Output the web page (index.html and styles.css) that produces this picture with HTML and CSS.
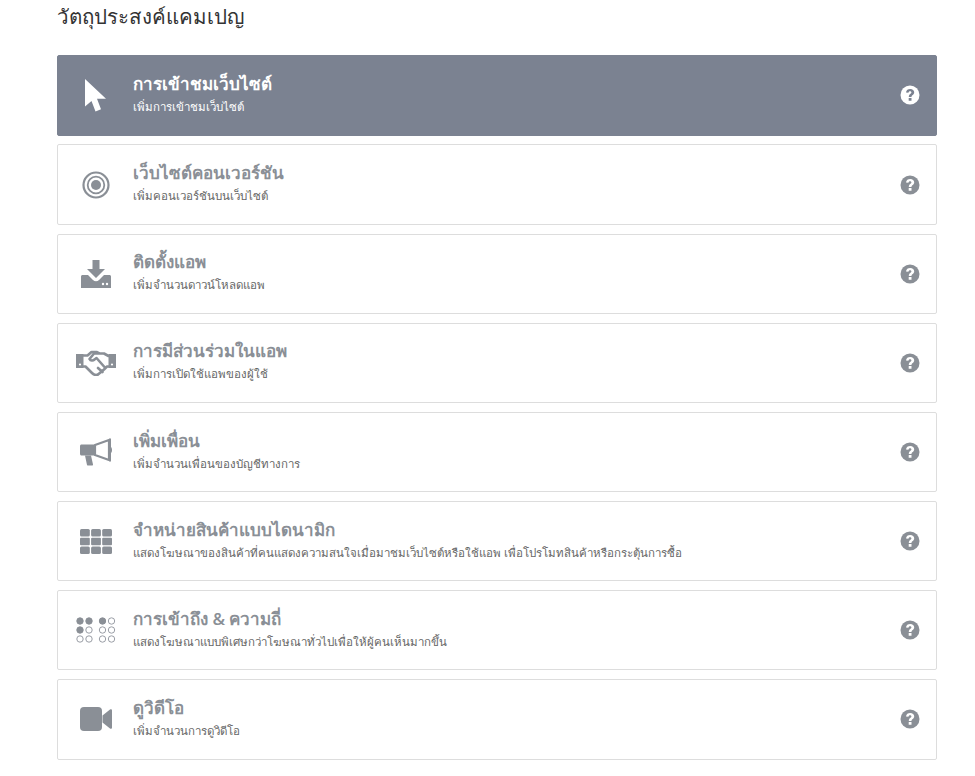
FILE: index.html
```html
<!DOCTYPE html>
<html lang="th">
<head>
<meta charset="utf-8">
<title>วัตถุประสงค์แคมเปญ</title>
<link rel="stylesheet" href="styles.css">
</head>
<body>
<main class="page">
  <h1 class="heading">วัตถุประสงค์แคมเปญ</h1>
  <div class="list">
    <div class="card active">
      <div class="icon"><svg width="24" height="34" viewBox="0 0 24 34"><path d="M1 1V28.500l6.500-5.500L11.500 33.500l5.500-2.200-4-10.500h9z" fill="currentColor"/></svg></div>
      <div class="text"><div class="title">การเข้าชมเว็บไซต์</div><div class="sub">เพิ่มการเข้าชมเว็บไซต์</div></div>
      <svg class="help" width="20" height="20" viewBox="0 0 20 20"><circle cx="10" cy="10" r="9.500" fill="currentColor"/><path class="q" d="M6 7.500C6.200 5 8 3.900 10.200 3.900c2.300 0 4 1.400 4 3.400 0 2.700-2.700 2.800-2.700 4.700H8.800c0-3.100 2.600-3.100 2.600-4.500 0-.8-.6-1.300-1.400-1.300-.9 0-1.400.6-1.600 1.500z M8.700 13h2.800v2.800H8.700z"/></svg>
    </div>
    <div class="card">
      <div class="icon"><svg width="28" height="28" viewBox="0 0 28 28"><circle cx="14" cy="14" r="12.500" fill="none" stroke="currentColor" stroke-width="2.200"/><circle cx="14" cy="14" r="8.300" fill="none" stroke="currentColor" stroke-width="1.800"/><circle cx="14" cy="14" r="5" fill="currentColor"/></svg></div>
      <div class="text"><div class="title">เว็บไซต์คอนเวอร์ชัน</div><div class="sub">เพิ่มคอนเวอร์ชันบนเว็บไซต์</div></div>
      <svg class="help" width="20" height="20" viewBox="0 0 20 20"><circle cx="10" cy="10" r="9.500" fill="currentColor"/><path class="q" d="M6 7.500C6.200 5 8 3.900 10.200 3.900c2.300 0 4 1.400 4 3.400 0 2.700-2.700 2.800-2.700 4.700H8.800c0-3.100 2.600-3.100 2.600-4.500 0-.8-.6-1.300-1.400-1.300-.9 0-1.400.6-1.600 1.500z M8.700 13h2.800v2.800H8.700z"/></svg>
    </div>
    <div class="card">
      <div class="icon"><svg width="30" height="28" viewBox="0 0 30 28"><path d="M11.500 0h7v9H24L15 18 6 9h5.500z" fill="currentColor"/><path d="M1.500 15H7l5 5c1.700 1.600 4.300 1.600 6 0l5-5h5.500c.8 0 1.500.7 1.500 1.500V28H0V16.500C0 15.700.7 15 1.500 15z" fill="currentColor"/><circle cx="22" cy="24" r="1.200" fill="#fff"/><circle cx="26" cy="24" r="1.200" fill="#fff"/></svg></div>
      <div class="text"><div class="title">ติดตั้งแอพ</div><div class="sub">เพิ่มจำนวนดาวน์โหลดแอพ</div></div>
      <svg class="help" width="20" height="20" viewBox="0 0 20 20"><circle cx="10" cy="10" r="9.500" fill="currentColor"/><path class="q" d="M6 7.500C6.200 5 8 3.900 10.200 3.900c2.300 0 4 1.400 4 3.400 0 2.700-2.700 2.800-2.700 4.700H8.800c0-3.100 2.600-3.100 2.600-4.500 0-.8-.6-1.300-1.400-1.300-.9 0-1.400.6-1.600 1.500z M8.700 13h2.800v2.800H8.700z"/></svg>
    </div>
    <div class="card">
      <div class="icon"><svg width="40" height="26" viewBox="0 0 40 26"><path d="M0 4h7.500v14H0z M32.500 4H40v14h-7.500z" fill="currentColor"/><circle cx="4" cy="14.500" r="1.100" fill="#fff"/><circle cx="36" cy="14.500" r="1.100" fill="#fff"/><path d="M7.500 5.500h4L15.500 2h5l3 1.500H28l4.500 2.500M7.500 16.500h2L16 23c2 2 4 2.500 6 1.500l6-5 3-3h1.500M23 3.500h-5l-4.500 5.500c1 2 3.500 2 5 .5l2-1.500 7.500 8.500M22 18l4.500 4" fill="none" stroke="currentColor" stroke-width="2.600" stroke-linejoin="round" stroke-linecap="round"/></svg></div>
      <div class="text"><div class="title">การมีส่วนร่วมในแอพ</div><div class="sub">เพิ่มการเปิดใช้แอพของผู้ใช้</div></div>
      <svg class="help" width="20" height="20" viewBox="0 0 20 20"><circle cx="10" cy="10" r="9.500" fill="currentColor"/><path class="q" d="M6 7.500C6.200 5 8 3.900 10.200 3.900c2.300 0 4 1.400 4 3.400 0 2.700-2.700 2.800-2.700 4.700H8.800c0-3.100 2.600-3.100 2.600-4.500 0-.8-.6-1.300-1.400-1.300-.9 0-1.400.6-1.600 1.500z M8.700 13h2.800v2.800H8.700z"/></svg>
    </div>
    <div class="card">
      <div class="icon"><svg width="32" height="28" viewBox="0 0 32 28"><path d="M1.500 6.500H15v11H1.500C.7 17.500 0 16.800 0 16V8c0-.8.700-1.500 1.500-1.500z" fill="currentColor"/><path d="M5 17.500h6l2 9c.1.700-.3 1-1 1H8c-.7 0-1-.3-1.100-1z" fill="currentColor"/><path d="M15 7 29 2v20l-14-5z" fill="none" stroke="currentColor" stroke-width="2.200" stroke-linejoin="round"/><path d="M29 .5h2v23h-2z M31 9c.6.500 1 1.500 1 3s-.4 2.500-1 3z" fill="currentColor"/></svg></div>
      <div class="text"><div class="title">เพิ่มเพื่อน</div><div class="sub">เพิ่มจำนวนเพื่อนของบัญชีทางการ</div></div>
      <svg class="help" width="20" height="20" viewBox="0 0 20 20"><circle cx="10" cy="10" r="9.500" fill="currentColor"/><path class="q" d="M6 7.500C6.200 5 8 3.900 10.200 3.900c2.300 0 4 1.400 4 3.400 0 2.700-2.700 2.800-2.700 4.700H8.800c0-3.100 2.600-3.100 2.600-4.500 0-.8-.6-1.300-1.400-1.300-.9 0-1.400.6-1.600 1.500z M8.700 13h2.800v2.800H8.700z"/></svg>
    </div>
    <div class="card">
      <div class="icon"><svg width="32" height="25" viewBox="0 0 32 25" fill="currentColor"><rect width="9.800" height="7.500" rx="1.500"/><rect x="11.100" width="9.800" height="7.500" rx="1.500"/><rect x="22.200" width="9.800" height="7.500" rx="1.500"/><rect y="8.800" width="9.800" height="7.500" rx="1"/><rect x="11.100" y="8.800" width="9.800" height="7.500" rx="1"/><rect x="22.200" y="8.800" width="9.800" height="7.500" rx="1"/><rect y="17.500" width="9.800" height="7.500" rx="1.500"/><rect x="11.100" y="17.500" width="9.800" height="7.500" rx="1.500"/><rect x="22.200" y="17.500" width="9.800" height="7.500" rx="1.500"/></svg></div>
      <div class="text"><div class="title">จำหน่ายสินค้าแบบไดนามิก</div><div class="sub">แสดงโฆษณาของสินค้าที่คนแสดงความสนใจเมื่อมาชมเว็บไซต์หรือใช้แอพ เพื่อโปรโมทสินค้าหรือกระตุ้นการซื้อ</div></div>
      <svg class="help" width="20" height="20" viewBox="0 0 20 20"><circle cx="10" cy="10" r="9.500" fill="currentColor"/><path class="q" d="M6 7.500C6.200 5 8 3.900 10.200 3.900c2.300 0 4 1.400 4 3.400 0 2.700-2.700 2.800-2.700 4.700H8.800c0-3.100 2.600-3.100 2.600-4.500 0-.8-.6-1.300-1.400-1.300-.9 0-1.400.6-1.600 1.500z M8.700 13h2.800v2.800H8.700z"/></svg>
    </div>
    <div class="card">
      <div class="icon"><svg width="40" height="26" viewBox="0 0 40 26"><g fill="currentColor" stroke="currentColor"><circle cx="4" cy="4" r="3.200"/><circle cx="13" cy="4" r="3.200"/><circle cx="26.500" cy="4" r="3.200"/><circle cx="4" cy="13" r="3.200"/></g><g fill="none" stroke="#9a9ea6"><circle cx="35.500" cy="4" r="3.200"/><circle cx="13" cy="13" r="3.200"/><circle cx="26.500" cy="13" r="3.200"/><circle cx="35.500" cy="13" r="3.200"/><circle cx="4" cy="22" r="3.200"/><circle cx="13" cy="22" r="3.200"/><circle cx="26.500" cy="22" r="3.200"/><circle cx="35.500" cy="22" r="3.200"/></g></svg></div>
      <div class="text"><div class="title">การเข้าถึง &amp; ความถี่</div><div class="sub">แสดงโฆษณาแบบพิเศษกว่าโฆษณาทั่วไปเพื่อให้ผู้คนเห็นมากขึ้น</div></div>
      <svg class="help" width="20" height="20" viewBox="0 0 20 20"><circle cx="10" cy="10" r="9.500" fill="currentColor"/><path class="q" d="M6 7.500C6.200 5 8 3.900 10.200 3.900c2.300 0 4 1.400 4 3.400 0 2.700-2.700 2.800-2.700 4.700H8.800c0-3.100 2.600-3.100 2.600-4.500 0-.8-.6-1.300-1.400-1.300-.9 0-1.400.6-1.600 1.500z M8.700 13h2.800v2.800H8.700z"/></svg>
    </div>
    <div class="card">
      <div class="icon"><svg width="32" height="24" viewBox="0 0 32 24"><rect width="22" height="24" rx="4" fill="currentColor"/><path d="M22.500 8.500 30 2.500c1-.7 2-.2 2 1v17c0 1.200-1 1.700-2 1l-7.500-6z" fill="currentColor"/></svg></div>
      <div class="text"><div class="title">ดูวิดีโอ</div><div class="sub">เพิ่มจำนวนการดูวิดีโอ</div></div>
      <svg class="help" width="20" height="20" viewBox="0 0 20 20"><circle cx="10" cy="10" r="9.500" fill="currentColor"/><path class="q" d="M6 7.500C6.200 5 8 3.900 10.200 3.900c2.300 0 4 1.400 4 3.400 0 2.700-2.700 2.800-2.700 4.700H8.800c0-3.100 2.600-3.100 2.600-4.500 0-.8-.6-1.300-1.400-1.300-.9 0-1.400.6-1.600 1.500z M8.700 13h2.800v2.800H8.700z"/></svg>
    </div>
  </div>
</main>
</body>
</html>
```
FILE: styles.css
```css
html, body { margin: 0; padding: 0; background: #fff; }
body { font-family: "Open Sans", "Noto Sans", "DejaVu Sans", sans-serif; }
.page { width: 880px; margin-left: 57px; }
.heading { margin: 0; height: 55.250px; padding-top: 1px; box-sizing: border-box; font-size: 20.500px; line-height: 30px; font-weight: 400; color: #333; }
.list { display: flex; flex-direction: column; gap: 8.750px; }
.card { height: 80.400px; box-sizing: border-box; display: flex; align-items: center; border: 1px solid #ddd; border-radius: 2px; padding-right: 16px; color: #8a8f96; background: #fff; }
.card.active { background: #7b8291; border-color: #7b8291; color: #fff; }
.icon { width: 75px; display: flex; justify-content: center; flex: none; }
.text { flex: 1; min-width: 0; margin-top: -3px; }
.title { font-size: 17px; line-height: 24px; font-weight: 600; color: #8a8f96; }
.sub { font-size: 11.500px; line-height: 18px; color: #666; margin-top: 2px; }
.active .title, .active .sub { color: #fff; }
.help { flex: none; }
.q { fill: #fff; }
.active .q { fill: #7b8291; }
```
